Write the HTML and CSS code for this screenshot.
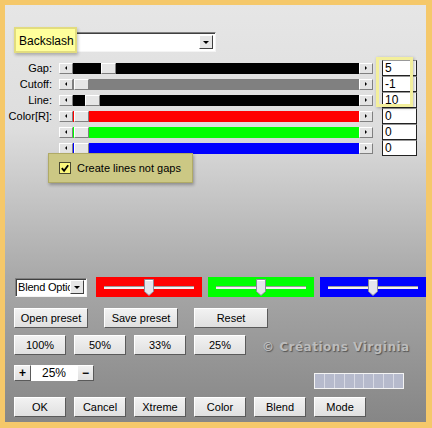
FILE: index.html
```html
<!DOCTYPE html>
<html>
<head>
<meta charset="utf-8">
<link rel="stylesheet" href="styles.css">
</head>
<body>
<div class="frame">
  <div class="combo wide">
    <span class="hl">Backslash</span>
    <span class="combo-btn"><span class="arr-down"></span></span>
  </div>

  <div class="sliders">
    <div class="row"><span class="lbl">Gap:</span>
      <div class="sb"><span class="sb-btn"><span class="arr-l"></span></span><div class="track t-black"><span class="thumb" style="left:28px"></span></div><span class="sb-btn"><span class="arr-r"></span></span></div>
      <span class="num">5</span></div>
    <div class="row"><span class="lbl">Cutoff:</span>
      <div class="sb"><span class="sb-btn"><span class="arr-l"></span></span><div class="track t-gray"><span class="thumb" style="left:1px"></span></div><span class="sb-btn"><span class="arr-r"></span></span></div>
      <span class="num">-1</span></div>
    <div class="row"><span class="lbl">Line:</span>
      <div class="sb"><span class="sb-btn"><span class="arr-l"></span></span><div class="track t-black"><span class="thumb" style="left:12px"></span></div><span class="sb-btn"><span class="arr-r"></span></span></div>
      <span class="num">10</span></div>
    <div class="row"><span class="lbl">Color[R]:</span>
      <div class="sb"><span class="sb-btn"><span class="arr-l"></span></span><div class="track t-red"><span class="thumb" style="left:1px"></span></div><span class="sb-btn"><span class="arr-r"></span></span></div>
      <span class="num">0</span></div>
    <div class="row"><span class="lbl"></span>
      <div class="sb"><span class="sb-btn"><span class="arr-l"></span></span><div class="track t-green"><span class="thumb" style="left:1px"></span></div><span class="sb-btn"><span class="arr-r"></span></span></div>
      <span class="num">0</span></div>
    <div class="row"><span class="lbl"></span>
      <div class="sb"><span class="sb-btn"><span class="arr-l"></span></span><div class="track t-blue"><span class="thumb" style="left:1px"></span></div><span class="sb-btn"><span class="arr-r"></span></span></div>
      <span class="num">0</span></div>
    <span class="num-hl"></span>
  </div>

  <div class="note">
    <span class="chk"><svg width="11" height="11" viewBox="0 0 11 11"><path d="M2 5 L4.5 8 L9 2" fill="none" stroke="#000" stroke-width="2"/></svg></span>
    <span>Create lines not gaps</span>
  </div>

  <div class="row-a">
    <div class="combo small"><span class="combo-text">Blend Optic</span><span class="combo-btn"><span class="arr-down"></span></span></div>
    <div class="tb c-red"><span class="tb-line"></span><svg class="tb-thumb" width="10" height="17" viewBox="0 0 10 17"><path d="M0.5 0.5 H9.5 V12.5 L5 16.5 L0.5 12.5 Z" fill="#e4e4ec" stroke="#8a8a9a"/><path d="M1.5 1.5 H8.5" stroke="#fff"/></svg></div>
    <div class="tb c-green"><span class="tb-line"></span><svg class="tb-thumb" width="10" height="17" viewBox="0 0 10 17"><path d="M0.5 0.5 H9.5 V12.5 L5 16.5 L0.5 12.5 Z" fill="#e4e4ec" stroke="#8a8a9a"/><path d="M1.5 1.5 H8.5" stroke="#fff"/></svg></div>
    <div class="tb c-blue"><span class="tb-line"></span><svg class="tb-thumb" width="10" height="17" viewBox="0 0 10 17"><path d="M0.5 0.5 H9.5 V12.5 L5 16.5 L0.5 12.5 Z" fill="#e4e4ec" stroke="#8a8a9a"/><path d="M1.5 1.5 H8.5" stroke="#fff"/></svg></div>
  </div>

  <div class="row-b">
    <span class="btn wb">Open preset</span>
    <span class="btn wb">Save preset</span>
    <span class="btn wb">Reset</span>
  </div>

  <div class="row-c">
    <span class="btn">100%</span>
    <span class="btn">50%</span>
    <span class="btn">33%</span>
    <span class="btn">25%</span>
    <span class="wm">© Créations Virginia</span>
  </div>

  <div class="row-d">
    <span class="btn pm">+</span>
    <span class="zoom">25%</span>
    <span class="btn pm">−</span>
    <span class="prog"><i></i><i></i><i></i><i></i><i></i><i></i><i></i><i></i><i></i></span>
  </div>

  <div class="row-e">
    <span class="btn">OK</span>
    <span class="btn">Cancel</span>
    <span class="btn">Xtreme</span>
    <span class="btn">Color</span>
    <span class="btn">Blend</span>
    <span class="btn">Mode</span>
  </div>
</div>
</body>
</html>
```

FILE: styles.css
```css
* { box-sizing: border-box; }
body {
  margin: 0;
  font-family: "Liberation Sans", Arial, sans-serif;
  font-size: 11px;
  color: #000;
}
.frame {
  width: 432px;
  height: 428px;
  border-style: solid;
  border-color: #f5c86a;
  border-width: 5px 6px 6px 5px;
  background: linear-gradient(#e6e6e6 0%, #dddddd 30%, #a9a9a9 65%, #868686 100%);
  padding-left: 9px;
  display: flex;
  flex-direction: column;
  overflow: hidden;
}

/* combo boxes */
.combo {
  background: #fff;
  border: 1px solid;
  border-color: #808080 #f4f4f4 #f4f4f4 #808080;
  box-shadow: inset 1px 1px 0 #404040;
  display: flex;
  align-items: center;
  justify-content: flex-end;
  padding-right: 2px;
  position: relative;
}
.combo.wide { margin-top: 27px; width: 202px; height: 20px; }
.combo-btn {
  width: 14px;
  height: 14px;
  flex: none;
  background: #e6e6e6;
  border: 1px solid;
  border-color: #fff #404040 #404040 #fff;
  display: flex;
  align-items: center;
  justify-content: center;
}
.arr-down {
  width: 0; height: 0;
  border-left: 3px solid transparent;
  border-right: 3px solid transparent;
  border-top: 3px solid #000;
}
.hl {
  position: absolute;
  left: -1px;
  top: -6px;
  width: 63px;
  height: 26px;
  background: #ffff9c;
  border: 2px solid #e2dc7e;
  box-shadow: 1px 2px 3px rgba(0,0,0,0.25);
  padding: 5px 0 0 3px;
  line-height: 14px;
  font-size: 12px;
}

/* slider rows */
.sliders { margin-top: 8px; margin-left: -9px; position: relative; }
.row { display: flex; align-items: center; height: 16px; }
.lbl { width: 47px; text-align: right; margin-right: 7px; white-space: nowrap; font-size: 11px; }
.sb { width: 314px; height: 11px; display: flex; }
.sb-btn {
  width: 14px;
  height: 11px;
  background: #e4e4e4;
  border: 1px solid;
  border-color: #fff #808080 #808080 #fff;
  display: flex;
  align-items: center;
  justify-content: center;
}
.arr-l { width: 0; height: 0; border-top: 2px solid transparent; border-bottom: 2px solid transparent; border-right: 2px solid #000; }
.arr-r { width: 0; height: 0; border-top: 2px solid transparent; border-bottom: 2px solid transparent; border-left: 2px solid #000; }
.track { flex: 1; position: relative; }
.t-black { background: #000; }
.t-gray { background: #808080; }
.t-red { background: #ff0000; }
.t-green { background: #00ff00; }
.t-blue { background: #0000ff; }
.thumb {
  position: absolute;
  top: 0;
  width: 15px;
  height: 11px;
  background: #e6e6e6;
  border: 1px solid;
  border-color: #fff #808080 #808080 #fff;
}
.num {
  margin-left: 9px;
  width: 35px;
  height: 16px;
  background: #fff;
  border: 1px solid #222;
  border-top-color: #999;
  padding-left: 2px;
  line-height: 14px;
  font-size: 12px;
}
.num-hl {
  position: absolute;
  left: 371px;
  top: -3px;
  width: 37px;
  height: 50px;
  border: 3px solid #f3ef9c;
  box-shadow: 1px 1px 3px rgba(0,0,0,0.3);
}

/* note */
.note {
  margin-top: -3px;
  margin-left: 34px;
  width: 145px;
  height: 30px;
  background: #ccc884;
  border: 1px solid #b0aa66;
  box-shadow: 1px 2px 3px rgba(0,0,0,0.3);
  display: flex;
  align-items: center;
  padding-left: 10px;
  gap: 6px;
  position: relative;
  font-size: 11px;
}
.chk {
  width: 12px;
  height: 12px;
  background: #fbf77c;
  border: 1px solid #4a4a30;
  display: flex;
  align-items: center;
  justify-content: center;
}

/* bottom area */
.row-a { margin-top: 94px; display: flex; align-items: center; height: 20px; }
.combo.small { margin-left: 1px; margin-right: 9px; width: 72px; height: 19px; justify-content: space-between; padding-left: 2px; }
.combo-text { overflow: hidden; white-space: nowrap; flex: 1; min-width: 0; font-size: 11px; letter-spacing: -0.2px; }
.tb {
  width: 106px;
  height: 20px;
  position: relative;
  display: flex;
  align-items: center;
  padding: 0 8px;
  margin-right: 6px;
}
.c-red { background: #ff0000; }
.c-green { background: #00ff00; }
.c-blue { background: #0000ff; margin-right: 0; }
.tb-line {
  flex: 1;
  height: 3px;
  background: #f4f0f0;
  border-top: 1px solid #9a9a9a;
}
.tb-thumb { position: absolute; left: 48px; top: 2px; }

.btn {
  width: 52px;
  height: 20px;
  background: linear-gradient(#f2f2f2, #e0e0e0);
  border: 1px solid;
  border-color: #fff #5a5a5a #5a5a5a #fff;
  display: flex;
  align-items: center;
  justify-content: center;
  font-size: 11px;
  white-space: nowrap;
}
.btn.wb { width: 74px; }
.row-b { margin-top: 11px; display: flex; gap: 16px; }
.row-c { margin-top: 7px; display: flex; gap: 8px; align-items: center; }
.wm {
  margin-left: 8px;
  margin-top: 4px;
  font-family: "DejaVu Sans", "Liberation Sans", sans-serif;
  font-weight: bold;
  font-size: 12px;
  letter-spacing: 0.5px;
  color: #bcbcbc;
  text-shadow: 1px 1px 1px #555;
  white-space: nowrap;
}
.row-d { margin-top: 10px; display: flex; align-items: flex-start; }
.btn.pm { width: 17px; height: 16px; font-weight: bold; font-size: 12px; }
.zoom {
  width: 46px;
  height: 16px;
  background: #fff;
  display: flex;
  align-items: center;
  justify-content: center;
  font-size: 12px;
}
.prog {
  margin-left: 220px;
  margin-top: 8px;
  width: 90px;
  height: 16px;
  background: #b6bacc;
  border: 1px solid #f4f4f4;
  display: flex;
}
.prog i { flex: 1; border-right: 1px solid #d8dae4; }
.prog i:last-child { border-right: none; }
.row-e { margin-top: 8px; display: flex; gap: 8px; }
```
